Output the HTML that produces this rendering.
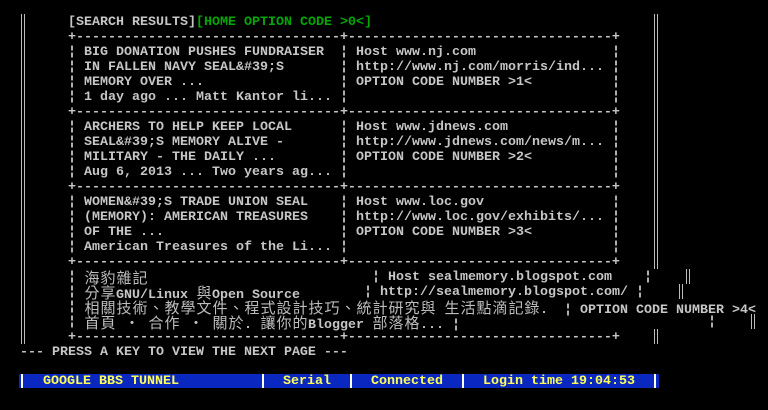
<!DOCTYPE html>
<html><head><meta charset="utf-8"><style>
html,body{margin:0;padding:0;background:#000;width:768px;height:410px;overflow:hidden}
.t{position:absolute;white-space:pre;line-height:15px;font-family:"Liberation Mono","Noto Sans CJK TC",monospace;font-size:13.33px;font-weight:bold;color:#c6c6c6;margin:1px 0 0 0}
.g{color:#00a800}
.c{font-family:"Noto Sans CJK TC","WenQuanYi Zen Hei",sans-serif;font-weight:normal;font-size:15px;display:inline-block;width:16px;text-align:center;color:#bdbdbd}
.bar{position:absolute;width:2px;border-left:1px solid #bbb;border-right:1px solid #bbb}
.y{color:#ffff55}
.w{position:absolute;top:374px;width:2px;height:14px;background:#fff}
</style></head><body>
<div class="bar" style="left:21px;top:14px;height:330px"></div>
<div class="bar" style="left:654px;top:14px;height:255px"></div>
<div class="bar" style="left:686px;top:269px;height:15px"></div>
<div class="bar" style="left:679px;top:284px;height:15px"></div>
<div class="bar" style="left:751px;top:314px;height:15px"></div>
<div class="bar" style="left:654px;top:329px;height:15px"></div>

<div class="t" style="left:68px;top:14px">[SEARCH RESULTS]<span class="g">[HOME OPTION CODE &gt;0&lt;]</span></div>

<div class="t" style="left:68px;top:29px">+---------------------------------+---------------------------------+</div>
<div class="t" style="left:68px;top:104px">+---------------------------------+---------------------------------+</div>
<div class="t" style="left:68px;top:179px">+---------------------------------+---------------------------------+</div>
<div class="t" style="left:68px;top:254px">+---------------------------------+---------------------------------+</div>
<div class="t" style="left:68px;top:329px">+---------------------------------+---------------------------------+</div>

<div class="t" style="left:68px;top:44px">¦
¦
¦
¦</div>
<div class="t" style="left:340px;top:44px">¦
¦
¦
¦</div>
<div class="t" style="left:612px;top:44px">¦
¦
¦
¦</div>
<div class="t" style="left:84px;top:44px">BIG DONATION PUSHES FUNDRAISER
IN FALLEN NAVY SEAL&amp;#39;S
MEMORY OVER ...
1 day ago ... Matt Kantor li...</div>
<div class="t" style="left:356px;top:44px">Host www.nj.com
http://www.nj.com/morris/ind...
OPTION CODE NUMBER &gt;1&lt;</div>

<div class="t" style="left:68px;top:119px">¦
¦
¦
¦</div>
<div class="t" style="left:340px;top:119px">¦
¦
¦
¦</div>
<div class="t" style="left:612px;top:119px">¦
¦
¦
¦</div>
<div class="t" style="left:84px;top:119px">ARCHERS TO HELP KEEP LOCAL
SEAL&amp;#39;S MEMORY ALIVE -
MILITARY - THE DAILY ...
Aug 6, 2013 ... Two years ag...</div>
<div class="t" style="left:356px;top:119px">Host www.jdnews.com
http://www.jdnews.com/news/m...
OPTION CODE NUMBER &gt;2&lt;</div>

<div class="t" style="left:68px;top:194px">¦
¦
¦
¦</div>
<div class="t" style="left:340px;top:194px">¦
¦
¦
¦</div>
<div class="t" style="left:612px;top:194px">¦
¦
¦
¦</div>
<div class="t" style="left:84px;top:194px">WOMEN&amp;#39;S TRADE UNION SEAL
(MEMORY): AMERICAN TREASURES
OF THE ...
American Treasures of the Li...</div>
<div class="t" style="left:356px;top:194px">Host www.loc.gov
http://www.loc.gov/exhibits/...
OPTION CODE NUMBER &gt;3&lt;</div>

<div class="t" style="left:68px;top:269px">¦
¦
¦
¦</div>
<div class="t" style="left:84px;top:269px"><span class="c">海</span><span class="c">豹</span><span class="c">雜</span><span class="c">記</span></div>
<div class="t" style="left:372px;top:269px">¦ Host sealmemory.blogspot.com    ¦</div>
<div class="t" style="left:84px;top:284px"><span class="c">分</span><span class="c">享</span>GNU/Linux <span class="c">與</span>Open Source</div>
<div class="t" style="left:364px;top:284px">¦ http://sealmemory.blogspot.com/ ¦</div>
<div class="t" style="left:84px;top:299px"><span class="c">相</span><span class="c">關</span><span class="c">技</span><span class="c">術</span><span class="c">、</span><span class="c">教</span><span class="c">學</span><span class="c">文</span><span class="c">件</span><span class="c">、</span><span class="c">程</span><span class="c">式</span><span class="c">設</span><span class="c">計</span><span class="c">技</span><span class="c">巧</span><span class="c">、</span><span class="c">統</span><span class="c">計</span><span class="c">研</span><span class="c">究</span><span class="c">與</span> <span class="c">生</span><span class="c">活</span><span class="c">點</span><span class="c">滴</span><span class="c">記</span><span class="c">錄</span>.  ¦ OPTION CODE NUMBER &gt;4&lt;</div>
<div class="t" style="left:84px;top:314px"><span class="c">首</span><span class="c">頁</span> <span class="c">·</span> <span class="c">合</span><span class="c">作</span> <span class="c">·</span> <span class="c">關</span><span class="c">於</span>. <span class="c">讓</span><span class="c">你</span><span class="c">的</span>Blogger <span class="c">部</span><span class="c">落</span><span class="c">格</span>... ¦</div>
<div class="t" style="left:708px;top:314px">¦</div>

<div class="t" style="left:20px;top:344px">--- PRESS A KEY TO VIEW THE NEXT PAGE ---</div>

<div style="position:absolute;left:19px;top:374px;width:640px;height:14px;background:#0a28c0"></div>
<div class="w" style="left:21px"></div>
<div class="w" style="left:262px"></div>
<div class="w" style="left:350px"></div>
<div class="w" style="left:462px"></div>
<div class="w" style="left:654px"></div>
<div class="t y" style="left:43px;top:373px">GOOGLE BBS TUNNEL</div>
<div class="t y" style="left:283px;top:373px">Serial</div>
<div class="t y" style="left:371px;top:373px">Connected</div>
<div class="t y" style="left:483px;top:373px">Login time 19:04:53</div>
</body></html>
